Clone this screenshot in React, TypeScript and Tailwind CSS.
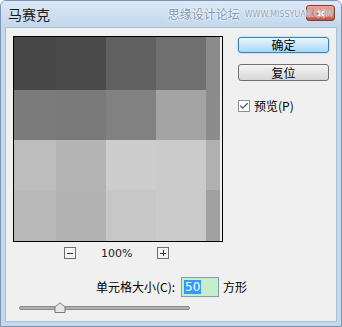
import { Check } from 'lucide-react'

const cjk = { fontFamily: '"Noto Sans CJK SC", "Liberation Sans", sans-serif' }

const colWidths = [42, 50, 50, 50, 14]
const rowHeights = [53, 50, 50, 51]

const cells = [
  ['#474747', '#4b4b4b', '#616161', '#6f6f6f', '#8b8b8b'],
  ['#7b7b7b', '#797979', '#818181', '#a4a4a4', '#8c8c8c'],
  ['#bdbdbd', '#b4b4b4', '#cdcdcd', '#cbcbcb', '#b0b0b0'],
  ['#b9b9b9', '#b3b3b3', '#c7c7c7', '#cacaca', '#a1a1a1'],
]

export default function App() {
  return (
    <div className="w-[342px] h-[327px] flex flex-col bg-[#c4d8ec] border border-[#7a96b4] rounded-t-[6px] overflow-hidden" style={cjk}>
      {/* Title bar */}
      <div className="relative h-[26px] flex items-center pl-[7px] pr-[8px] bg-gradient-to-b from-[#dce9f6] to-[#c3d7ec]">
        {/* close button */}
        <div className="absolute right-[6px] top-[4px] w-[29px] h-[16px] rounded-[3px] border border-[#8a3a2e] bg-gradient-to-b from-[#e9a99a] to-[#c4503a] flex items-center justify-center">
          <svg width="10" height="9" viewBox="0 0 10 9">
            <path d="M1.5 1 L8.5 8 M8.5 1 L1.5 8" stroke="#fff" strokeWidth="2.2" />
          </svg>
        </div>
        <span className="text-[14px] text-[#1a1a1a] leading-none">马赛克</span>
        <span className="ml-auto text-[12px] text-[#7f96b0] leading-none [text-shadow:0_0_2px_#fff,0_0_2px_#fff]">思缘设计论坛</span>
        <span className="relative z-10 ml-[5px] mt-[2px] text-[8px] text-[#8aa0b8] leading-none [text-shadow:0_0_1px_#fff,0_0_2px_#fff]" style={{ fontFamily: '"DejaVu Sans", sans-serif' }}>
          WWW.MISSYUAN.COM
        </span>
      </div>

      {/* Client area */}
      <div className="flex-1 mx-[4px] mb-[4px] bg-[#f0f0f0] border border-[#a9bfd6] flex flex-col">
        <div className="flex pt-[8px] pl-[7px]">
          <div className="flex flex-col">
            <div className="w-[210px] border border-black flex flex-col">
              {rowHeights.map((h, r) => (
                <div key={r} className="flex" style={{ height: h }}>
                  {colWidths.map((w, c) => (
                    <div key={c} style={{ width: w, background: cells[r][c] }} />
                  ))}
                </div>
              ))}
            </div>
            <div className="flex items-center mt-[5px] pl-[51px] h-[12px]">
              <div className="w-[12px] h-[12px] border border-[#6d6d6d] bg-[#f4f4f4] flex items-center justify-center">
                <div className="w-[6px] h-[1px] bg-[#333]" />
              </div>
              <span className="ml-[25px] text-[11px] text-[#222] leading-none" style={{ fontFamily: '"DejaVu Sans", sans-serif' }}>100%</span>
              <div className="ml-[25px] w-[12px] h-[12px] border border-[#6d6d6d] bg-[#f4f4f4] relative flex items-center justify-center">
                <div className="w-[6px] h-[1px] bg-[#333]" />
                <div className="absolute w-[1px] h-[6px] bg-[#333]" />
              </div>
            </div>
          </div>

          <div className="flex flex-col ml-[15px] pt-[1px]">
            <button className="w-[91px] h-[16px] rounded-[3px] border border-[#3c7fb1] bg-gradient-to-b from-[#eaf6fd] to-[#a7d9f5] text-[12px] text-black leading-none shadow-[0_0_2px_#6cc4f2] flex items-center justify-center">
              确定
            </button>
            <button className="mt-[11px] w-[91px] h-[17px] rounded-[3px] border border-[#707070] bg-gradient-to-b from-[#f4f4f4] to-[#d6d6d6] text-[12px] text-black leading-none flex items-center justify-center">
              复位
            </button>
            <div className="mt-[19px] flex items-center">
              <div className="w-[12px] h-[12px] border border-[#8e8f8f] bg-white flex items-center justify-center">
                <Check className="w-[10px] h-[10px] text-[#3a5a8c]" strokeWidth={3} />
              </div>
              <span className="ml-[4px] text-[12px] text-black leading-none">预览(P)</span>
            </div>
          </div>
        </div>

        <div className="flex items-center mt-[18px] pl-[90px]">
          <span className="text-[12px] text-black leading-none">单元格大小(C):</span>
          <div className="ml-[6px] w-[38px] h-[20px] border border-[#7f9db9] bg-[#c9ecca] flex items-center pl-[2px]">
            <span className="bg-[#3399ff] text-white text-[12px] leading-[14px] px-[1px]" style={{ fontFamily: '"DejaVu Sans", sans-serif' }}>50</span>
          </div>
          <span className="ml-[4px] text-[12px] text-black leading-none">方形</span>
        </div>

        <div className="relative mt-[6px] ml-[13px] w-[171px] h-[10px] flex items-center">
          <div className="w-full h-[4px] rounded-full bg-[#b0b0b0] border border-[#8a8a8a]" />
          <svg className="absolute left-[35px] top-[-1px]" width="12" height="11" viewBox="0 0 12 11">
            <path d="M1 10.5 V5 L6 0.8 L11 5 V10.5 Z" fill="#e6e6e6" stroke="#7a7a7a" />
          </svg>
        </div>
      </div>
    </div>
  )
}
